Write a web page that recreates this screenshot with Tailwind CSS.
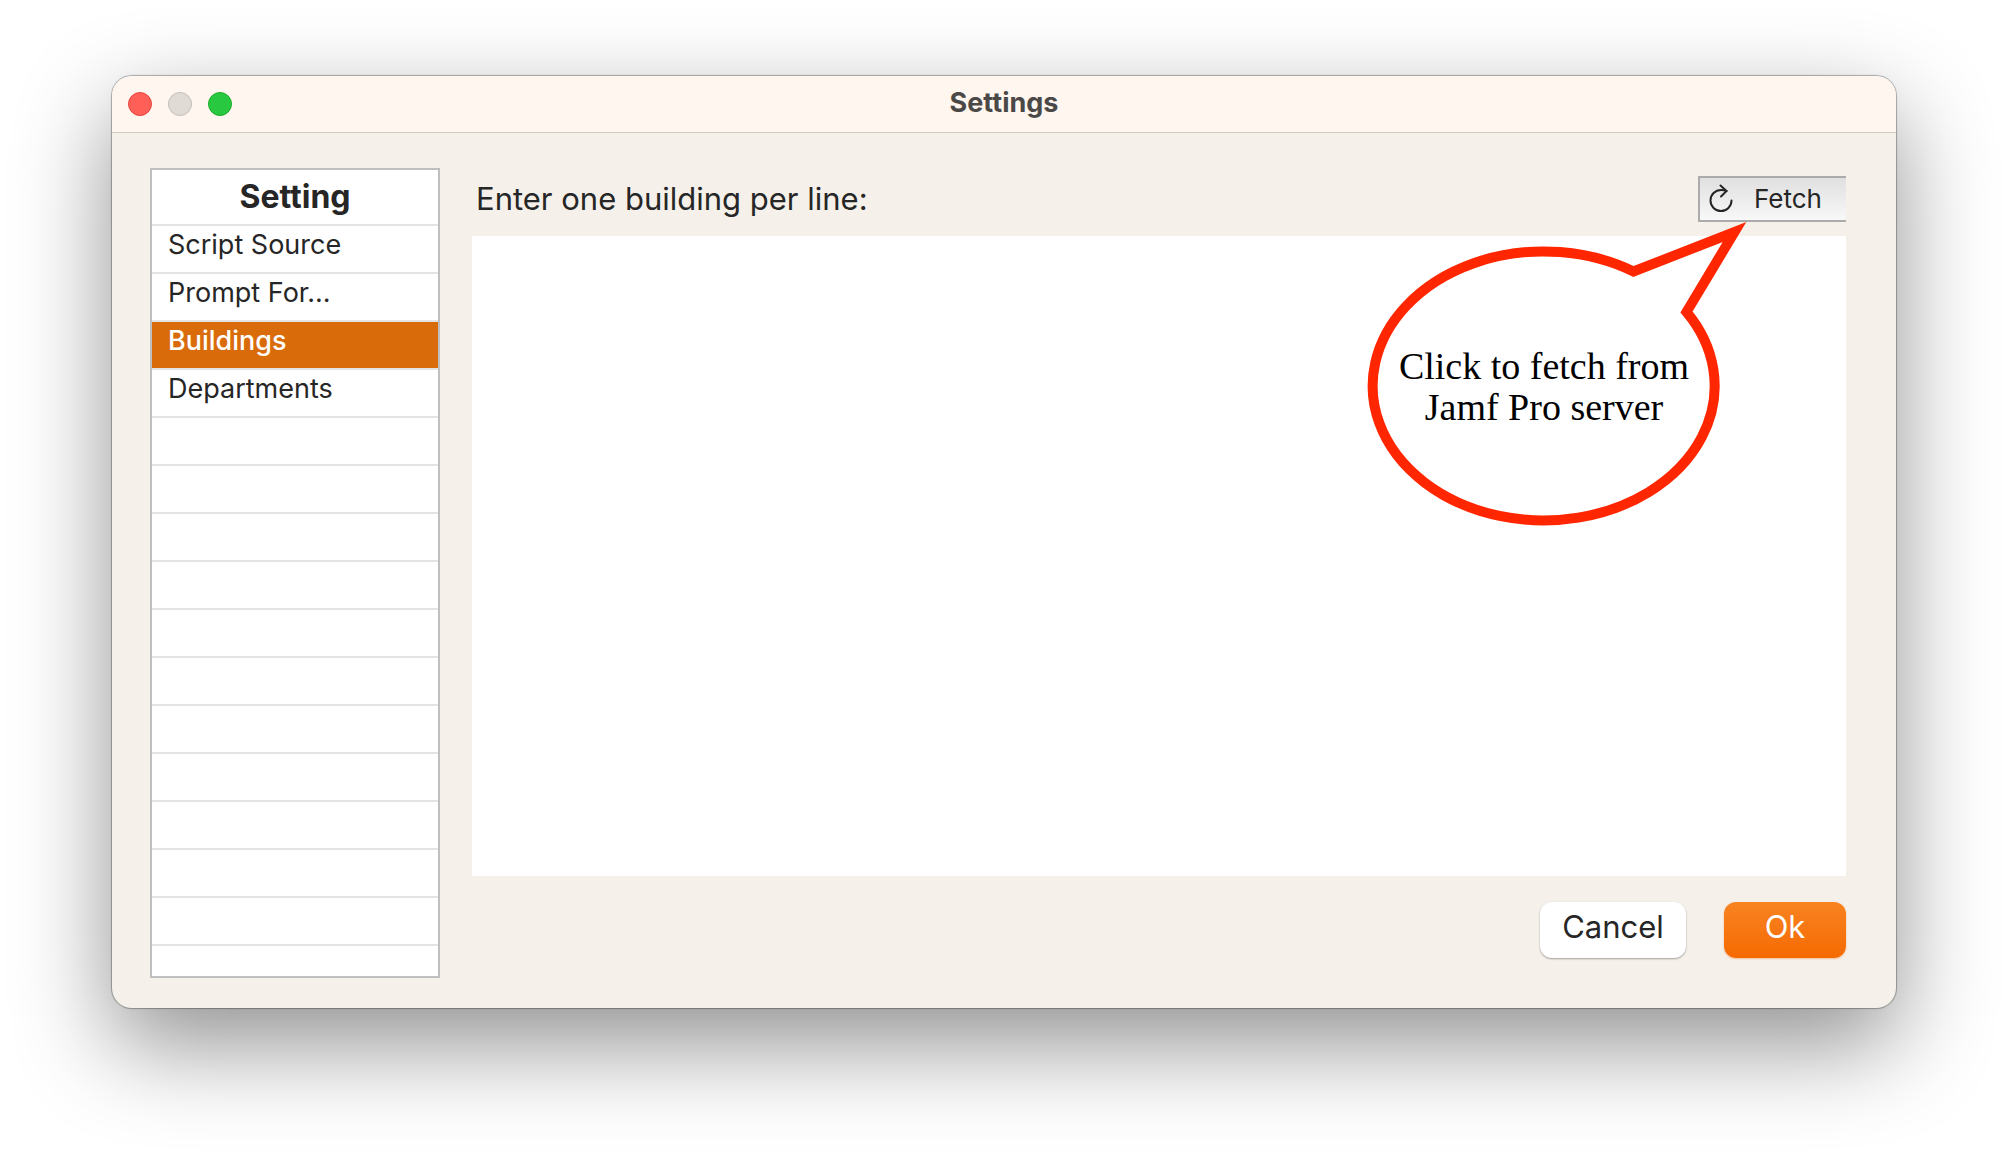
<!DOCTYPE html>
<html lang="en">
  <head>
    <meta charset="UTF-8" />
    <meta name="viewport" content="width=device-width, initial-scale=1.0" />
    <title>Settings</title>
    <script src="https://cdn.jsdelivr.net/npm/@tailwindcss/browser@4"></script>
  </head>
  <body class="bg-white font-['Inter','Liberation_Sans',sans-serif] text-[#262626]">
    <div class="px-28 pt-19 pb-37">
      <main
        class="rounded-[20px] overflow-hidden bg-[#f5f0ea] shadow-[0_0_1px_1px_rgba(0,0,0,0.3),0_36px_96px_rgba(0,0,0,0.44)]"
      >
        <!-- Title bar -->
        <header
          class="grid grid-cols-[1fr_auto_1fr] items-center h-[57px] px-4 bg-[#fef6ef] border-b border-[#d0cac4]"
        >
          <div class="flex gap-4">
            <button type="button" aria-label="Close" class="size-6 rounded-full bg-[#ff5f57] border border-[#e2463f]"></button>
            <button type="button" aria-label="Minimize" disabled class="size-6 rounded-full bg-[#e0dbd5] border border-[#c4bfba]"></button>
            <button type="button" aria-label="Zoom" class="size-6 rounded-full bg-[#28c840] border border-[#1dad2b]"></button>
          </div>
          <h1 class="pb-0.5 text-[27px] leading-8 font-bold text-[#4b4947]">Settings</h1>
        </header>

        <div class="flex gap-8 pt-[35px] pb-[30px] pl-[38px] pr-[50px]">
          <!-- Settings list -->
          <div class="w-[290px] shrink-0 bg-white border-2 border-[#bfbfbf]">
            <table class="w-full border-separate border-spacing-0 text-[27px] leading-9">
              <thead>
                <tr>
                  <th scope="col" class="h-14 p-0 border-b-2 border-[#e4e4e4] text-[32px] font-bold">Setting</th>
                </tr>
              </thead>
              <tbody>
                <tr><td class="h-12 p-0 pl-4 pb-2 border-b-2 border-[#e4e4e4]">Script Source</td></tr>
                <tr><td class="h-12 p-0 pl-4 pb-2 border-b-2 border-[#e4e4e4]">Prompt For...</td></tr>
                <tr aria-selected="true"><td class="h-12 p-0 pl-4 pb-2 border-b-2 border-[#e4e4e4] bg-[#d96b0b] bg-clip-padding font-medium text-white">Buildings</td></tr>
                <tr><td class="h-12 p-0 pl-4 pb-2 border-b-2 border-[#e4e4e4]">Departments</td></tr>
                <tr><td class="h-12 p-0 border-b-2 border-[#e4e4e4]"></td></tr>
                <tr><td class="h-12 p-0 border-b-2 border-[#e4e4e4]"></td></tr>
                <tr><td class="h-12 p-0 border-b-2 border-[#e4e4e4]"></td></tr>
                <tr><td class="h-12 p-0 border-b-2 border-[#e4e4e4]"></td></tr>
                <tr><td class="h-12 p-0 border-b-2 border-[#e4e4e4]"></td></tr>
                <tr><td class="h-12 p-0 border-b-2 border-[#e4e4e4]"></td></tr>
                <tr><td class="h-12 p-0 border-b-2 border-[#e4e4e4]"></td></tr>
                <tr><td class="h-12 p-0 border-b-2 border-[#e4e4e4]"></td></tr>
                <tr><td class="h-12 p-0 border-b-2 border-[#e4e4e4]"></td></tr>
                <tr><td class="h-12 p-0 border-b-2 border-[#e4e4e4]"></td></tr>
                <tr><td class="h-12 p-0 border-b-2 border-[#e4e4e4]"></td></tr>
                <tr><td class="h-[30px] p-0"></td></tr>
              </tbody>
            </table>
          </div>

          <!-- Buildings -->
          <form class="flex flex-col flex-1 min-w-0 pt-2 pb-5">
            <div class="flex items-center justify-between">
              <label for="buildings" class="pl-1 text-[31px] leading-10">Enter one building per line:</label>
              <button
                type="button"
                class="flex items-center gap-[18px] h-[46px] pl-2 pr-6 border-2 border-r-0 border-[#ababab] bg-linear-to-b from-[#e0e0e0] to-[#f8f8f8] text-[26px] leading-8"
              >
                <svg class="w-7 h-8" viewBox="0 0 28 32" fill="none" stroke="currentColor" stroke-width="2" stroke-linecap="round">
                  <path d="M23.500 17.500A10.500 10.500 0 1 1 13 7Q16 7 18.500 8" />
                  <path d="M12.500 2.500L18.500 8L13 13.500" />
                </svg>
                Fetch
              </button>
            </div>

            <div class="relative flex flex-1 mt-3.5">
              <textarea id="buildings" class="w-full resize-none bg-white p-2 text-[26px] outline-none"></textarea>
              <div class="absolute -top-4 right-[98px] w-[382px] h-[308px] pointer-events-none">
                <svg class="absolute inset-0" width="382" height="308" viewBox="0 0 382 308">
                  <path
                    d="M267.500 51.500A171 134.500 0 1 0 320.500 92L368.500 12Z"
                    fill="#fff"
                    stroke="#ff2600"
                    stroke-width="10"
                    stroke-miterlimit="10"
                  />
                </svg>
                <p
                  class="relative w-[356px] pt-[126px] text-center text-black text-[38px] leading-[41px] font-['Liberation_Serif',serif]"
                >
                  Click to fetch from<br />Jamf Pro server
                </p>
              </div>
            </div>

            <div class="flex justify-end gap-[38px] mt-[26px]">
              <button type="button" class="h-14 w-[146px] pb-1.5 rounded-xl bg-white text-[31px] leading-10 shadow-[0_1px_2px_rgba(0,0,0,0.35)]">Cancel</button>
              <button type="submit" class="h-14 w-[122px] pb-1.5 rounded-xl bg-linear-to-b from-[#f8831f] to-[#f56a00] text-white text-[31px] leading-10 shadow-[0_1px_2px_rgba(245,106,0,0.35)]">Ok</button>
            </div>
          </form>
        </div>
      </main>
    </div>
  </body>
</html>
